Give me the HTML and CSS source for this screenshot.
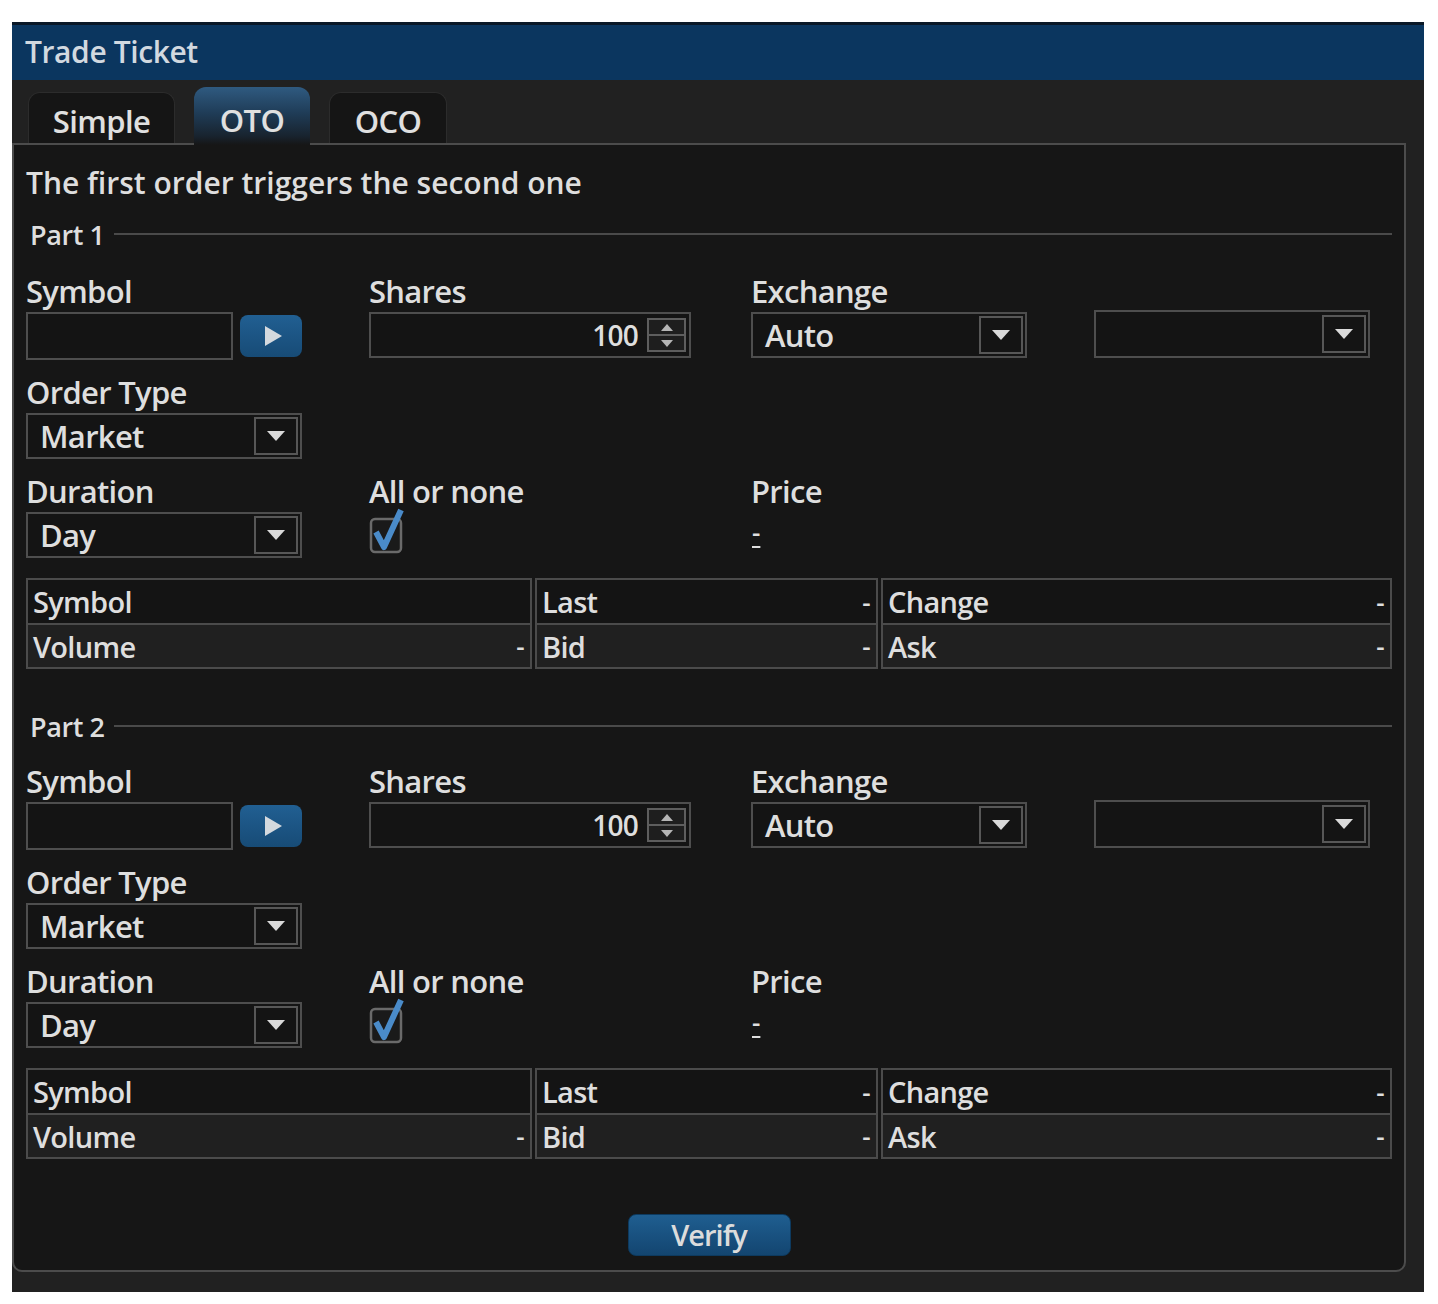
FILE: index.html
```html
<!DOCTYPE html>
<html>
<head>
<meta charset="utf-8">
<title>Trade Ticket</title>
<link rel="stylesheet" href="styles.css">
</head>
<body>
<div class="window">
  <div class="titlebar">Trade Ticket</div>
  <div class="tabs">
    <div class="tab tab-simple">Simple</div>
    <div class="tab tab-oto active">OTO</div>
    <div class="tab tab-oco">OCO</div>
  </div>
  <div class="panel">
    <div class="desc">The first order triggers the second one</div>

    <section class="part part-one">
      <div class="legend"><span class="legend-text">Part 1</span><span class="rule"></span></div>
      <div class="form-grid">
        <div class="cell">
          <div class="label">Symbol</div>
          <div class="symbol-row">
            <div class="input symbol-input"></div>
            <div class="go-btn"><svg width="22" height="22" viewBox="0 0 22 22"><path d="M3 1 L20 11 L3 21 Z" fill="#d4d9de"/></svg></div>
          </div>
        </div>
        <div class="cell">
          <div class="label">Shares</div>
          <div class="input shares-input">
            <span class="shares-val">100</span>
            <div class="spinner">
              <div class="spin-half"><svg width="12" height="7" viewBox="0 0 12 7"><path d="M0 7 L6 0 L12 7 Z" fill="#b5b5b5"/></svg></div>
              <div class="spin-half"><svg width="12" height="7" viewBox="0 0 12 7"><path d="M0 0 L12 0 L6 7 Z" fill="#b5b5b5"/></svg></div>
            </div>
          </div>
        </div>
        <div class="cell">
          <div class="label">Exchange</div>
          <div class="input select"><span class="select-val">Auto</span><span class="arrow-box"><svg width="18" height="10" viewBox="0 0 18 10"><path d="M0 0 H18 L9 10 Z" fill="#dadada"/></svg></span></div>
        </div>
        <div class="cell">
          <div class="label">&nbsp;</div>
          <div class="input select select-tall"><span class="select-val"></span><span class="arrow-box"><svg width="18" height="10" viewBox="0 0 18 10"><path d="M0 0 H18 L9 10 Z" fill="#dadada"/></svg></span></div>
        </div>

        <div class="cell">
          <div class="label">Order Type</div>
          <div class="input select"><span class="select-val">Market</span><span class="arrow-box"><svg width="18" height="10" viewBox="0 0 18 10"><path d="M0 0 H18 L9 10 Z" fill="#dadada"/></svg></span></div>
        </div>
        <div class="cell"></div>
        <div class="cell"></div>
        <div class="cell"></div>

        <div class="cell">
          <div class="label">Duration</div>
          <div class="input select"><span class="select-val">Day</span><span class="arrow-box"><svg width="18" height="10" viewBox="0 0 18 10"><path d="M0 0 H18 L9 10 Z" fill="#dadada"/></svg></span></div>
        </div>
        <div class="cell">
          <div class="label">All or none</div>
          <div class="check-wrap"><svg width="40" height="48" viewBox="0 0 40 48"><rect x="2" y="13" width="30" height="33" rx="4" fill="#1a1a1a" stroke="#6a6a6a" stroke-width="2.5"/><path d="M7 26 L15 41 L32 4" fill="none" stroke="#4a8bc9" stroke-width="6" stroke-linejoin="round"/></svg></div>
        </div>
        <div class="cell">
          <div class="label">Price</div>
          <div class="price-val">-</div>
        </div>
        <div class="cell"></div>
      </div>
      <div class="quote">
        <div class="q r1"><span>Symbol</span><span></span></div>
        <div class="q r1"><span>Last</span><span class="dash">-</span></div>
        <div class="q r1"><span>Change</span><span class="dash">-</span></div>
        <div class="q r2"><span>Volume</span><span class="dash">-</span></div>
        <div class="q r2"><span>Bid</span><span class="dash">-</span></div>
        <div class="q r2"><span>Ask</span><span class="dash">-</span></div>
      </div>
    </section>

    <section class="part part-two">
      <div class="legend"><span class="legend-text">Part 2</span><span class="rule"></span></div>
      <div class="form-grid">
        <div class="cell">
          <div class="label">Symbol</div>
          <div class="symbol-row">
            <div class="input symbol-input"></div>
            <div class="go-btn"><svg width="22" height="22" viewBox="0 0 22 22"><path d="M3 1 L20 11 L3 21 Z" fill="#d4d9de"/></svg></div>
          </div>
        </div>
        <div class="cell">
          <div class="label">Shares</div>
          <div class="input shares-input">
            <span class="shares-val">100</span>
            <div class="spinner">
              <div class="spin-half"><svg width="12" height="7" viewBox="0 0 12 7"><path d="M0 7 L6 0 L12 7 Z" fill="#b5b5b5"/></svg></div>
              <div class="spin-half"><svg width="12" height="7" viewBox="0 0 12 7"><path d="M0 0 L12 0 L6 7 Z" fill="#b5b5b5"/></svg></div>
            </div>
          </div>
        </div>
        <div class="cell">
          <div class="label">Exchange</div>
          <div class="input select"><span class="select-val">Auto</span><span class="arrow-box"><svg width="18" height="10" viewBox="0 0 18 10"><path d="M0 0 H18 L9 10 Z" fill="#dadada"/></svg></span></div>
        </div>
        <div class="cell">
          <div class="label">&nbsp;</div>
          <div class="input select select-tall"><span class="select-val"></span><span class="arrow-box"><svg width="18" height="10" viewBox="0 0 18 10"><path d="M0 0 H18 L9 10 Z" fill="#dadada"/></svg></span></div>
        </div>

        <div class="cell">
          <div class="label">Order Type</div>
          <div class="input select"><span class="select-val">Market</span><span class="arrow-box"><svg width="18" height="10" viewBox="0 0 18 10"><path d="M0 0 H18 L9 10 Z" fill="#dadada"/></svg></span></div>
        </div>
        <div class="cell"></div>
        <div class="cell"></div>
        <div class="cell"></div>

        <div class="cell">
          <div class="label">Duration</div>
          <div class="input select"><span class="select-val">Day</span><span class="arrow-box"><svg width="18" height="10" viewBox="0 0 18 10"><path d="M0 0 H18 L9 10 Z" fill="#dadada"/></svg></span></div>
        </div>
        <div class="cell">
          <div class="label">All or none</div>
          <div class="check-wrap"><svg width="40" height="48" viewBox="0 0 40 48"><rect x="2" y="13" width="30" height="33" rx="4" fill="#1a1a1a" stroke="#6a6a6a" stroke-width="2.5"/><path d="M7 26 L15 41 L32 4" fill="none" stroke="#4a8bc9" stroke-width="6" stroke-linejoin="round"/></svg></div>
        </div>
        <div class="cell">
          <div class="label">Price</div>
          <div class="price-val">-</div>
        </div>
        <div class="cell"></div>
      </div>
      <div class="quote">
        <div class="q r1"><span>Symbol</span><span></span></div>
        <div class="q r1"><span>Last</span><span class="dash">-</span></div>
        <div class="q r1"><span>Change</span><span class="dash">-</span></div>
        <div class="q r2"><span>Volume</span><span class="dash">-</span></div>
        <div class="q r2"><span>Bid</span><span class="dash">-</span></div>
        <div class="q r2"><span>Ask</span><span class="dash">-</span></div>
      </div>
    </section>

    <div class="actions"><button class="verify">Verify</button></div>
  </div>
</div>
</body>
</html>
```

FILE: styles.css
```css
* { box-sizing: border-box; }

body {
  margin: 0;
  background: #ffffff;
  font-family: "Open Sans", "Noto Sans", sans-serif;
  font-weight: 600;
  color: #dedede;
}

.window {
  margin: 22px 0 0 12px;
  width: 1412px;
  background: #212121;
  padding-bottom: 20px;
}

.titlebar {
  height: 58px;
  background: #0b365f;
  border-top: 3px solid #0a1827;
  padding-left: 13px;
  font-size: 30px;
  line-height: 53px;
  color: #d2d9e0;
  letter-spacing: -0.4px;
}

.tabs {
  height: 63px;
  display: flex;
  align-items: flex-end;
  padding-left: 16px;
  gap: 19px;
}

.tab {
  height: 51px;
  border-radius: 12px 12px 0 0;
  background: #151515;
  border: 1px solid #2c2c2c;
  border-bottom: none;
  font-size: 31px;
  line-height: 56px;
  text-align: center;
  color: #e0e0e0;
  letter-spacing: -0.6px;
}

.tab-simple { width: 147px; }
.tab-oto { width: 116px; }
.tab-oco { width: 118px; }

.tab.active {
  height: 58px;
  margin-bottom: -2px;
  position: relative;
  z-index: 1;
  line-height: 66px;
  border: none;
  background: linear-gradient(to bottom, #2f5a80 0%, #1f3c57 45%, #18232e 85%, #161616 100%);
}

.panel {
  margin-right: 18px;
  border: 2px solid #4c4c4c;
  border-radius: 0 0 10px 10px;
  background: #161616;
  padding: 18px 12px 14px 12px;
}

.desc {
  font-size: 30px;
  line-height: 40px;
  letter-spacing: 0;
}

.part-one { margin-top: 17px; }
.part-two { margin-top: 43px; }

.legend {
  display: flex;
  align-items: center;
  height: 30px;
  padding-left: 4px;
}

.legend-text {
  font-size: 27px;
  line-height: 30px;
  letter-spacing: -0.4px;
}

.rule {
  flex: 1;
  height: 2px;
  background: #4a4a4a;
  margin-left: 9px;
  margin-top: -2px;
}

.form-grid {
  margin-top: 21px;
  display: grid;
  grid-template-columns: 343px 382px 343px 1fr;
  row-gap: 12px;
}

.part-two .form-grid { margin-top: 19px; }

.label {
  font-size: 31px;
  line-height: 41px;
  letter-spacing: -0.7px;
}

.input {
  height: 46px;
  border: 2px solid #4e4e4e;
  background: #141414;
}

.symbol-row {
  display: flex;
  align-items: center;
}

.symbol-input {
  width: 207px;
  height: 48px;
}

.go-btn {
  width: 62px;
  height: 42px;
  margin-left: 7px;
  border-radius: 8px;
  background: linear-gradient(to bottom, #215f92 0%, #174b76 100%);
  display: flex;
  align-items: center;
  justify-content: center;
  padding-left: 4px;
}

.shares-input {
  width: 322px;
  display: flex;
  align-items: center;
  justify-content: flex-end;
  padding-right: 3px;
}

.shares-val {
  font-size: 28px;
  margin-right: 9px;
  letter-spacing: -0.8px;
}

.spinner {
  width: 39px;
  height: 34px;
  border: 2px solid #5e5e5e;
  display: flex;
  flex-direction: column;
}

.spin-half {
  flex: 1;
  display: flex;
  align-items: center;
  justify-content: center;
  background: #1e1e1e;
}

.spin-half + .spin-half { border-top: 2px solid #5e5e5e; }

.select {
  width: 276px;
  display: flex;
  align-items: center;
  padding-left: 12px;
  padding-right: 2px;
}

.select-tall {
  height: 48px;
  margin-top: -2px;
}

.select-val {
  font-size: 31px;
  letter-spacing: -0.7px;
}

.arrow-box {
  margin-left: auto;
  width: 44px;
  height: 38px;
  border: 2px solid #575757;
  display: flex;
  align-items: center;
  justify-content: center;
}

.check-wrap {
  height: 46px;
  margin-top: -6px;
}

.price-val {
  font-size: 26px;
  line-height: 40px;
  text-decoration: underline;
  text-underline-offset: 4px;
  padding-left: 1px;
}

.quote {
  margin-top: 20px;
  display: grid;
  grid-template-columns: 506px 343px 1fr;
  column-gap: 3px;
}

.q {
  display: flex;
  justify-content: space-between;
  align-items: center;
  border: 2px solid #4b4b4b;
  padding: 0 6px 0 5px;
  font-size: 29px;
  letter-spacing: -0.7px;
}

.q.r1 {
  height: 45px;
  border-bottom: none;
  background: #141414;
}

.q.r2 {
  height: 46px;
  background: #202020;
}

.dash { font-size: 26px; }

.actions {
  margin-top: 55px;
  display: flex;
  justify-content: center;
}

.verify {
  width: 163px;
  height: 42px;
  border-radius: 8px;
  border: 1px solid #0d3a5f;
  background: linear-gradient(to bottom, #1f5e90 0%, #134570 100%);
  color: #dcdcdc;
  font-family: "Open Sans", "Noto Sans", sans-serif;
  font-weight: 600;
  font-size: 29px;
  line-height: 38px;
  letter-spacing: -1px;
  padding: 0;
}
```
